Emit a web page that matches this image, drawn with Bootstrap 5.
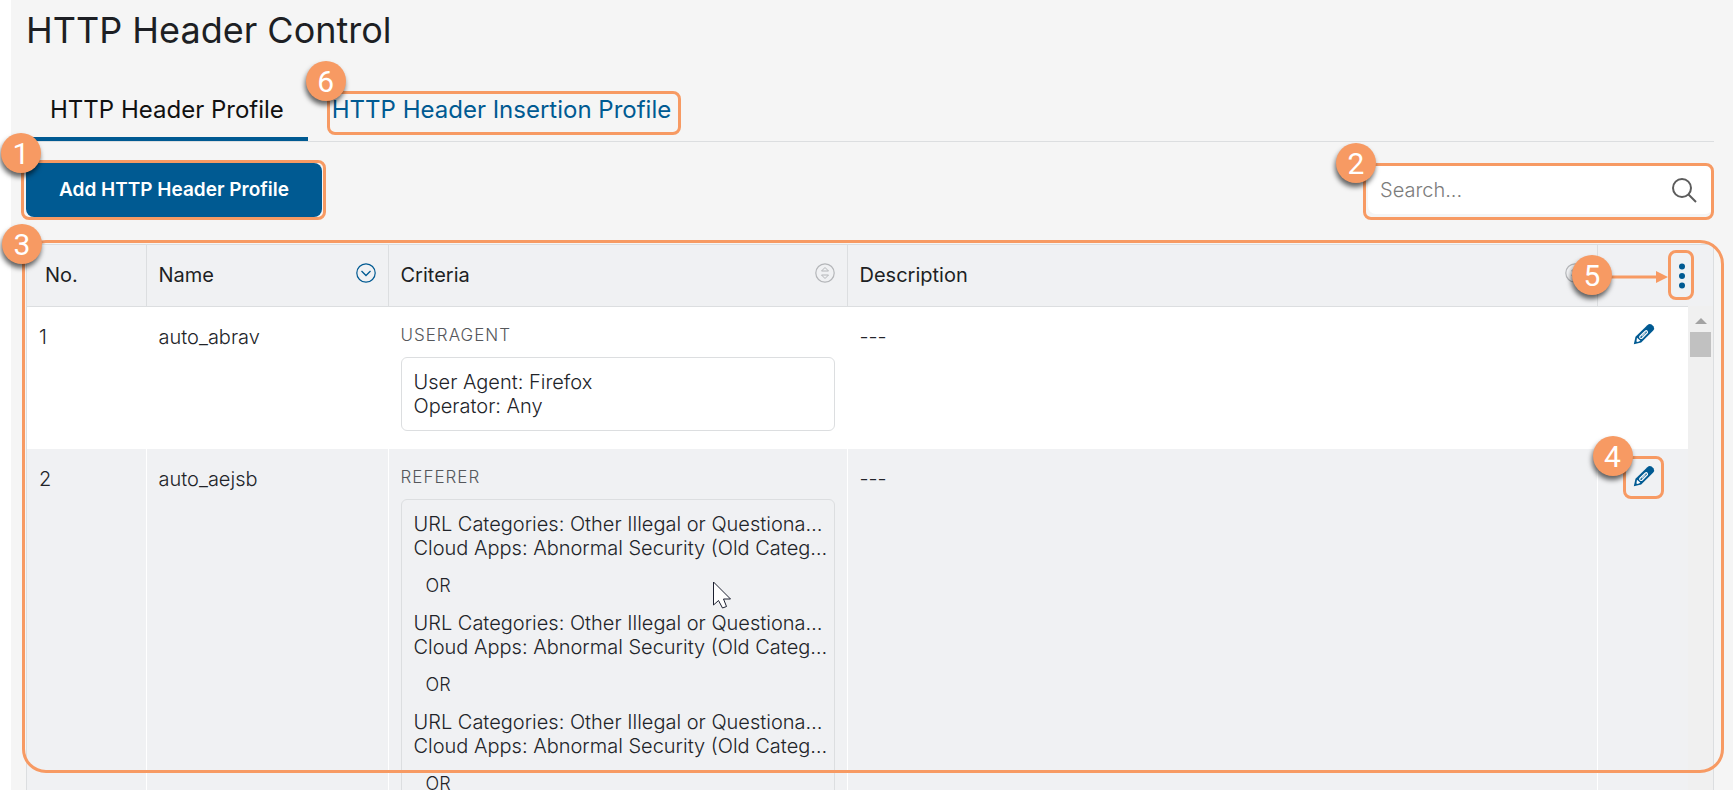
<!DOCTYPE html>
<html lang="en">
<head>
<meta charset="utf-8">
<meta name="viewport" content="width=device-width, initial-scale=1">
<title>HTTP Header Control</title>
<link href="https://cdn.jsdelivr.net/npm/bootstrap@5.3.0/dist/css/bootstrap.min.css" rel="stylesheet">
<style>
  :root { --brand: #005a92; --mark: #f79a63; --line: #dcdee0; --ink: #1d1f24; }
  body { font-family: Inter, "Liberation Sans", sans-serif; font-size: 20px; line-height: 24px; color: #222429; background: #fff; }
  .page-shell { margin-left: 11px; padding: 0 19px 0 15px; background: #f5f5f5; }
  .page-title { font-size: 36px; line-height: 44px; font-weight: 400; color: var(--ink); padding-top: 8px; margin-bottom: 30px; }
  .profile-tabs { border-bottom: 1px solid var(--line); margin-bottom: 21px; }
  .profile-tabs .nav-link { font-size: 24px; line-height: 28px; padding: 14px 24px 13px; border-bottom: 4px solid transparent; color: var(--brand); }
  .profile-tabs .nav-link.active { color: #111; border-color: var(--brand); }
  .btn-add { --bs-btn-color: #fff; --bs-btn-bg: var(--brand); --bs-btn-hover-bg: #004a7a; --bs-btn-hover-color: #fff; --bs-btn-border-radius: 8px; --bs-btn-font-weight: 600; --bs-btn-font-size: 19px; --bs-btn-border-width: 0; line-height: 24px; padding: 15px 33px; }
  .toolbar-row { margin-bottom: 27px; }
  .search-area { width: 345px; height: 48px; margin: 3px 1px 0 0; border-radius: 8px; background: #fff; padding: 0 16px 0 12px; }
  .search-area input { font-size: 20px; font-weight: 300; color: var(--ink); }
  .search-area input::placeholder { color: #7c7c7c; opacity: 1; }
  .table-frame { min-height: 0; }
  .table-clip { border: 1px solid var(--line); border-bottom: 0; background: #f0f1f3; }
  .profile-table { table-layout: fixed; color: inherit; }
  .profile-table th { height: 61px; padding: 0 12px; font-weight: 400; color: var(--ink); vertical-align: middle; border-bottom: 1px solid var(--line); }
  .profile-table th:first-child { padding-left: 18px; }
  .profile-table th .icon-btn { margin-bottom: 4px; }
  .profile-table th + th { border-left: 1px solid var(--line); }
  .profile-table td { padding: 18px 12px; vertical-align: top; font-weight: 300; }
  .profile-table td + td { border-left: 1px solid #fff; }
  .profile-table tbody tr:first-child { background: #fff; }
  .c-no { width: 119px; } .c-name { width: 242px; } .c-criteria { width: 459px; } .c-act { width: 116px; }
  .profile-table td.edit-cell { padding: 16px 12px 0 35px; }
  .kind-label { font-size: 17px; line-height: 20px; letter-spacing: 1px; color: #55575b; margin-bottom: 12px; }
  .rule-box { border: 1px solid var(--line); border-radius: 6px; padding: 12px; }
  .or-label { font-size: 18px; line-height: 24px; padding: 14px 12px 13px; }
  .icon-btn { border: 0; background: none; padding: 0; color: var(--brand); line-height: 0; }
  .sort-muted { color: #b4b6b9; }
  .scroll-strip { top: 62px; right: 1px; bottom: 0; width: 25px; background: #f0f0f0; }
  .scroll-thumb { width: 21px; height: 25px; background: #c1c1c1; margin-top: 8px; }
  .callout-box { position: absolute; border: 3px solid var(--mark); border-radius: 8px; pointer-events: none; z-index: 3; }
  .callout-num { position: absolute; width: 40px; height: 40px; border-radius: 50%; background: var(--mark); color: #fff; font: 30px/42px Roboto, "Liberation Sans", sans-serif; text-align: center; box-shadow: -1px 4px 5px rgba(0,0,0,.6); z-index: 4; pointer-events: none; }
  .callout-arrow { position: absolute; z-index: 3; pointer-events: none; }
  .pointer { position: absolute; z-index: 5; pointer-events: none; }
</style>
</head>
<body class="overflow-hidden">
<main class="page-shell vh-100 d-flex flex-column">
  <h1 class="page-title">HTTP Header Control</h1>

  <nav class="profile-tabs nav" aria-label="Profiles">
    <a class="nav-link active" aria-current="page" href="#profile">HTTP Header Profile</a>
    <div class="position-relative">
      <a class="nav-link" href="#insertion">HTTP Header Insertion Profile</a>
      <span class="callout-box" style="inset: 9px 14px 6px 19px"></span>
      <span class="callout-num" style="left: -2px; top: -21px">6</span>
    </div>
  </nav>

  <div class="toolbar-row d-flex justify-content-between align-items-start">
    <div class="position-relative">
      <button type="button" class="btn btn-add d-block">Add HTTP Header Profile</button>
      <span class="callout-box" style="inset: -3px -4px -3px -5px"></span>
      <span class="callout-num" style="left: -25px; top: -30px">1</span>
    </div>
    <div class="search-area position-relative d-flex align-items-center">
      <input class="form-control border-0 bg-transparent p-0 shadow-none" type="text" placeholder="Search..." aria-label="Search">
      <button type="button" class="icon-btn" aria-label="Run search">
        <svg width="26" height="26" viewBox="0 0 26 26" fill="none" stroke="#5c5c5c" stroke-width="2"><circle cx="11" cy="11" r="9"/><path d="M17.5 17.5 25 25"/></svg>
      </button>
      <span class="callout-box" style="inset: -3px -1px -6px -5px"></span>
      <span class="callout-num" style="left: -32px; top: -23px">2</span>
    </div>
  </div>

  <section class="table-frame position-relative flex-grow-1">
    <div class="table-clip h-100 overflow-hidden">
      <table class="profile-table w-100">
        <colgroup><col class="c-no"><col class="c-name"><col class="c-criteria"><col><col class="c-act"></colgroup>
        <thead>
          <tr>
            <th scope="col">No.</th>
            <th scope="col"><div class="d-flex justify-content-between">Name
              <button type="button" class="icon-btn" aria-label="Sort by name"><svg width="20" height="20" viewBox="0 0 20 20" fill="none" stroke="currentColor"><circle cx="10" cy="10" r="9.2" stroke-width="1.2"/><path d="m5.5 8 4.500 4.500L14.500 8" stroke-width="1.3"/></svg></button></div></th>
            <th scope="col"><div class="d-flex justify-content-between">Criteria
              <button type="button" class="icon-btn sort-muted" aria-label="Sort by criteria"><svg width="20" height="20" viewBox="0 0 20 20" fill="none" stroke="currentColor"><circle cx="10" cy="10" r="9.200" stroke-width="1.2"/><path d="M6.500 8 10 4.500 13.500 8ZM6.500 12 10 15.500 13.500 12Z"/></svg></button></div></th>
            <th scope="col"><div class="d-flex justify-content-between">Description
              <button type="button" class="icon-btn sort-muted" aria-label="Sort by description"><svg width="20" height="20" viewBox="0 0 20 20" fill="none" stroke="currentColor"><circle cx="10" cy="10" r="9.200" stroke-width="1.2"/><path d="M6.500 8 10 4.500 13.500 8ZM6.500 12 10 15.500 13.500 12Z"/></svg></button></div></th>
            <th scope="col" class="text-end"><button type="button" class="icon-btn me-3 mb-0" aria-label="Column menu"><svg width="6" height="26" viewBox="0 0 6 26" fill="currentColor"><circle cx="3" cy="3.500" r="3"/><circle cx="3" cy="13" r="3"/><circle cx="3" cy="22.500" r="3"/></svg></button></th>
          </tr>
        </thead>
        <tbody>
          <tr>
            <td>1</td>
            <td>auto_abrav</td>
            <td>
              <div class="kind-label">USERAGENT</div>
              <div class="rule-box">
                <div>User Agent: Firefox</div>
                <div>Operator: Any</div>
              </div>
            </td>
            <td>---</td>
            <td class="edit-cell"><button type="button" class="icon-btn d-block" aria-label="Edit auto_abrav"><svg width="22" height="22" viewBox="0 0 22 22"><use href="#pencil"/></svg></button></td>
          </tr>
          <tr>
            <td>2</td>
            <td>auto_aejsb</td>
            <td>
              <div class="kind-label">REFERER</div>
              <div class="rule-box text-nowrap">
                <div>URL Categories: Other Illegal or Questiona…</div>
                <div>Cloud Apps: Abnormal Security (Old Categ…</div>
                <div class="or-label">OR</div>
                <div>URL Categories: Other Illegal or Questiona…</div>
                <div>Cloud Apps: Abnormal Security (Old Categ…</div>
                <div class="or-label">OR</div>
                <div>URL Categories: Other Illegal or Questiona…</div>
                <div>Cloud Apps: Abnormal Security (Old Categ…</div>
                <div class="or-label">OR</div>
              </div>
            </td>
            <td>---</td>
            <td class="edit-cell"><div class="position-relative"><button type="button" class="icon-btn d-block" aria-label="Edit auto_aejsb"><svg width="22" height="22" viewBox="0 0 22 22"><use href="#pencil"/></svg></button>
              <span class="callout-box" style="left: -10px; top: -9px; width: 41px; height: 43px"></span>
              <span class="callout-num" style="left: -40px; top: -29px">4</span></div></td>
          </tr>
        </tbody>
      </table>
    </div>
    <div class="scroll-strip position-absolute d-flex flex-column align-items-center">
      <svg class="flex-shrink-0 mt-2 pt-1" width="12" height="10" viewBox="0 0 12 6"><path d="M0 6 6 0l6 6Z" fill="#a3a3a3"/></svg>
      <div class="scroll-thumb"></div>
    </div>
    <span class="callout-box" style="inset: -4px -10px 17px -4px; border-radius: 24px"></span>
    <span class="callout-num" style="left: -24px; top: -20px">3</span>
    <span class="callout-box" style="right: 20px; top: 6px; width: 26px; height: 50px"></span>
    <svg class="callout-arrow" style="right: 46px; top: 27px" width="62" height="12" viewBox="0 0 62 12" fill="#f79a63"><path d="M0 4.500H50V0L62 6 50 12V7.500H0Z"/></svg>
    <span class="callout-num" style="right: 102px; top: 11px">5</span>
    <svg class="pointer" style="left: 687px; top: 337px" width="20" height="30" viewBox="0 0 20 30"><path d="M.5 1V24L5.500 19.500 9.500 27 13.500 25.500 10.500 18H17.500Z" fill="#fff" stroke="#1c2030"/></svg>
  </section>
</main>
<svg width="0" height="0" class="position-absolute" aria-hidden="true">
  <symbol id="pencil" viewBox="0 0 22 22">
    <path d="M.8 21.200 2.500 13.800 14.300 2.300Q16.500.2 18.600 1.600L20.600 3.600Q22 5.600 20 7.800L8.200 19.500Z" fill="#005a92"/>
    <path d="M4 14.800 3.400 18.400 4.800 18.900 7.400 17.800Z" fill="#fff"/>
    <path d="M7 13.200 12.400 8Q13.500 7.300 14.200 8.400T14 10.200L9 15.200Q7.700 15.900 7 15T7 13.200Z" fill="#005a92" stroke="#fff" stroke-width="1.200"/>
    <path d="M8.800 13.500 12.600 9.800" stroke="#fff" fill="none"/>
  </symbol>
</svg>
<script src="https://cdn.jsdelivr.net/npm/bootstrap@5.3.0/dist/js/bootstrap.bundle.min.js"></script>
</body>
</html>
